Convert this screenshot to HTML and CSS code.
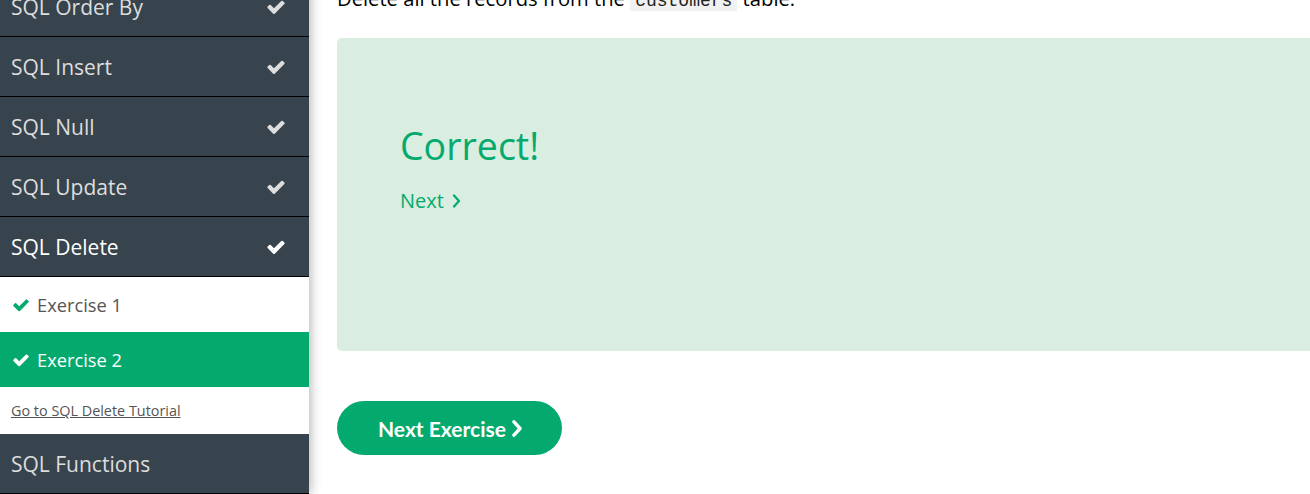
FILE: index.html
```html
<!DOCTYPE html>
<html lang="en">
<head>
<meta charset="utf-8">
<title>SQL Delete Exercise</title>
<link rel="stylesheet" href="styles.css">
</head>
<body>
<div class="page">
  <nav class="sidebar">
    <div class="nav-item"><span>SQL Order By</span><svg class="chk" viewBox="0 0 1792 1792"><path d="M1671 566q0 40-28 68l-724 724-136 136q-28 28-68 28t-68-28l-136-136-362-362q-28-28-28-68t28-68l136-136q28-28 68-28t68 28l294 295 656-657q28-28 68-28t68 28l136 136q28 28 28 68z"/></svg></div>
    <div class="nav-item"><span>SQL Insert</span><svg class="chk" viewBox="0 0 1792 1792"><path d="M1671 566q0 40-28 68l-724 724-136 136q-28 28-68 28t-68-28l-136-136-362-362q-28-28-28-68t28-68l136-136q28-28 68-28t68 28l294 295 656-657q28-28 68-28t68 28l136 136q28 28 28 68z"/></svg></div>
    <div class="nav-item"><span>SQL Null</span><svg class="chk" viewBox="0 0 1792 1792"><path d="M1671 566q0 40-28 68l-724 724-136 136q-28 28-68 28t-68-28l-136-136-362-362q-28-28-28-68t28-68l136-136q28-28 68-28t68 28l294 295 656-657q28-28 68-28t68 28l136 136q28 28 28 68z"/></svg></div>
    <div class="nav-item"><span>SQL Update</span><svg class="chk" viewBox="0 0 1792 1792"><path d="M1671 566q0 40-28 68l-724 724-136 136q-28 28-68 28t-68-28l-136-136-362-362q-28-28-28-68t28-68l136-136q28-28 68-28t68 28l294 295 656-657q28-28 68-28t68 28l136 136q28 28 28 68z"/></svg></div>
    <div class="nav-item active"><span>SQL Delete</span><svg class="chk" viewBox="0 0 1792 1792"><path d="M1671 566q0 40-28 68l-724 724-136 136q-28 28-68 28t-68-28l-136-136-362-362q-28-28-28-68t28-68l136-136q28-28 68-28t68 28l294 295 656-657q28-28 68-28t68 28l136 136q28 28 28 68z"/></svg></div>
    <div class="sub">
      <div class="ex"><svg class="ex-chk" viewBox="0 0 1792 1792"><path d="M1671 566q0 40-28 68l-724 724-136 136q-28 28-68 28t-68-28l-136-136-362-362q-28-28-28-68t28-68l136-136q28-28 68-28t68 28l294 295 656-657q28-28 68-28t68 28l136 136q28 28 28 68z"/></svg><span>Exercise 1</span></div>
      <div class="ex current"><svg class="ex-chk" viewBox="0 0 1792 1792"><path d="M1671 566q0 40-28 68l-724 724-136 136q-28 28-68 28t-68-28l-136-136-362-362q-28-28-28-68t28-68l136-136q28-28 68-28t68 28l294 295 656-657q28-28 68-28t68 28l136 136q28 28 28 68z"/></svg><span>Exercise 2</span></div>
      <div class="tut"><a href="#">Go to SQL Delete Tutorial</a></div>
    </div>
    <div class="nav-item"><span>SQL Functions</span></div>
  </nav>
  <main class="main">
    <p class="task">Delete all the records from the <code>customers</code> table.</p>
    <div class="result">
      <h2 class="correct">Correct!</h2>
      <a class="next-link" href="#">Next<svg class="chev" viewBox="0 0 8 14"><polyline points="1.5,1.5 6.5,7 1.5,12.5"/></svg></a>
    </div>
    <a class="next-btn" href="#">Next Exercise<svg class="chev btn-chev" viewBox="0 0 8 14"><polyline points="1.5,1.5 6.5,7 1.5,12.5"/></svg></a>
  </main>
</div>
</body>
</html>
```

FILE: styles.css
```css
html, body {
  margin: 0;
  padding: 0;
  background: #fff;
  overflow: hidden;
}

body {
  font-family: "Open Sans", "Noto Sans", sans-serif;
}

.page {
  display: flex;
  height: 494px;
}

.sidebar {
  flex: none;
  width: 309px;
  margin-top: -23px;
  background: #38444d;
  box-shadow: 2px 0 10px rgba(0, 0, 0, 0.28);
  position: relative;
  z-index: 1;
}

.nav-item {
  height: 59px;
  border-bottom: 1px solid #000;
  display: flex;
  align-items: center;
  justify-content: space-between;
  padding: 0 23px 0 11px;
  font-size: 21px;
  color: #ddd;
}

.nav-item.active {
  color: #fff;
}

.chk {
  width: 20px;
  height: 20px;
  fill: #ddd;
}

.nav-item.active .chk {
  fill: #fff;
}

.sub {
  background: #fff;
}

.ex {
  height: 55px;
  display: flex;
  align-items: center;
  gap: 7px;
  padding-left: 12px;
  font-size: 18.3px;
  color: #555;
}

.ex-chk {
  width: 18px;
  height: 18px;
  fill: #04aa6d;
}

.ex.current {
  background: #04aa6d;
  color: #fff;
}

.ex.current .ex-chk {
  fill: #fff;
}

.tut {
  height: 47px;
  display: flex;
  align-items: center;
  padding-left: 11px;
  font-size: 14.4px;
}

.tut a {
  color: #555;
  text-decoration: underline;
}

.main {
  flex: 1;
  padding-left: 28px;
}

.task {
  margin: -16px 0 23px;
  font-size: 20.2px;
  line-height: 28px;
  color: #000;
}

.task code {
  font-family: "Liberation Mono", monospace;
  font-size: 18px;
  background: #f1f1f1;
  padding: 0 5px;
  color: #222;
}

.result {
  height: 313px;
  box-sizing: border-box;
  background: #d9eee1;
  border-radius: 5px 0 0 5px;
  padding: 84px 63px 0;
}

.correct {
  margin: 0;
  font-size: 37.5px;
  line-height: 48px;
  font-weight: 400;
  color: #04aa6d;
}

.next-link {
  display: inline-flex;
  align-items: center;
  margin-top: 17px;
  font-size: 20px;
  line-height: 28px;
  color: #04aa6d;
  text-decoration: none;
}

.chev {
  width: 9px;
  height: 14px;
  margin-left: 8px;
  fill: none;
  stroke: currentColor;
  stroke-width: 2.3;
  stroke-linecap: round;
  stroke-linejoin: round;
}

.next-btn {
  display: inline-flex;
  align-items: center;
  margin-top: 50px;
  height: 54px;
  padding: 0 40px 0 41px;
  border-radius: 27px;
  background: #04aa6d;
  color: #fff;
  font-family: "Lato", sans-serif;
  font-weight: 700;
  font-size: 21px;
  text-decoration: none;
}

.btn-chev {
  width: 10px;
  height: 17px;
  margin-left: 6px;
  stroke-width: 2.8;
}
```
